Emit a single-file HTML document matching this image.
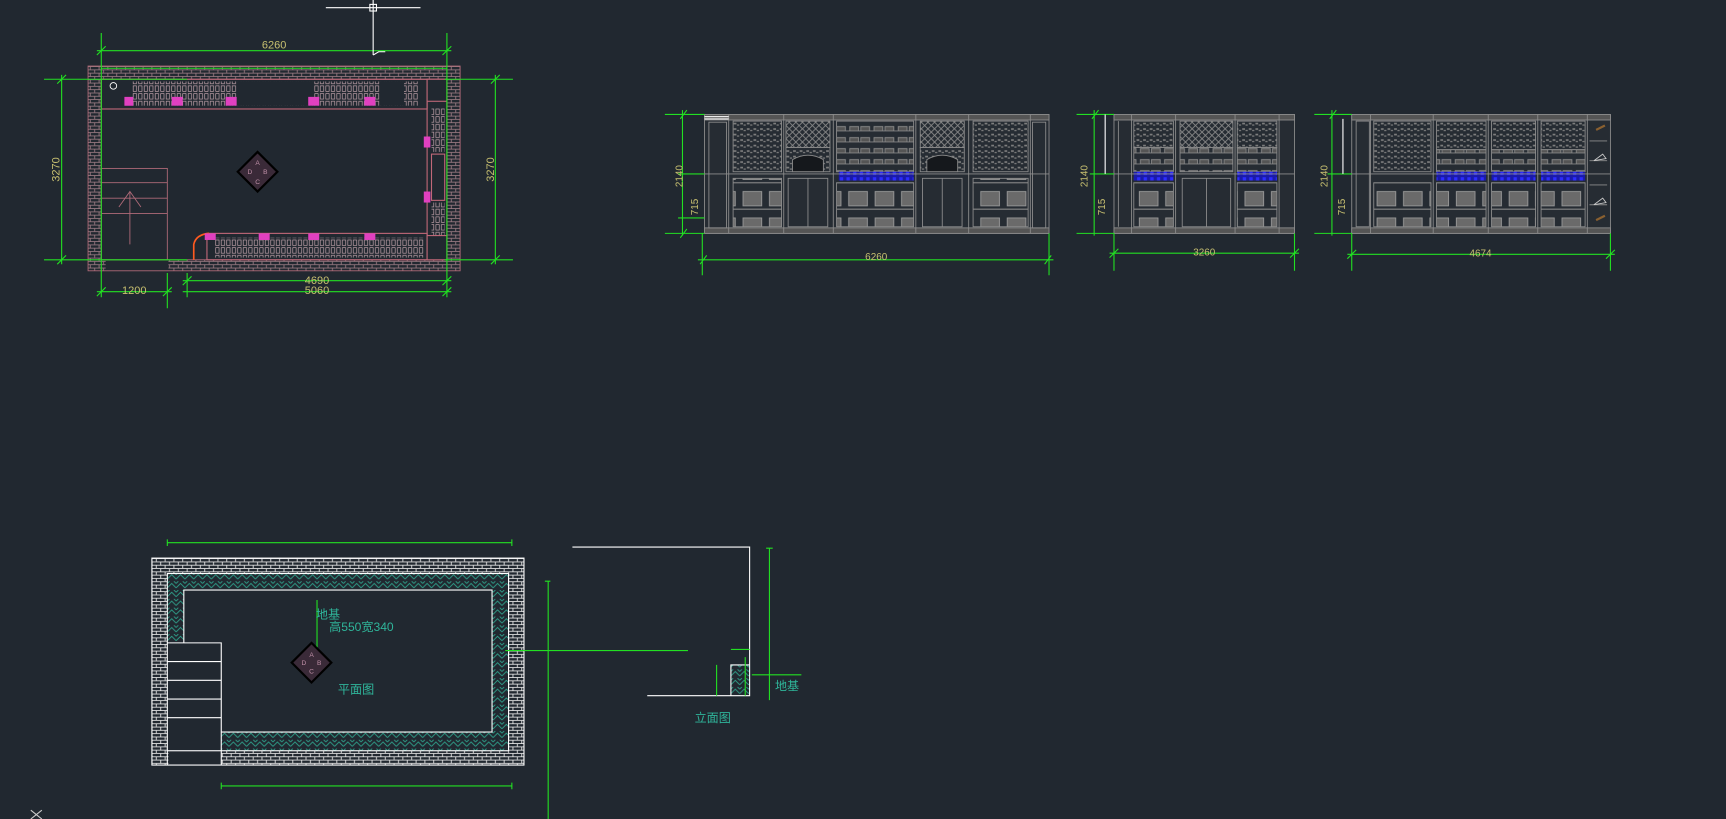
<!DOCTYPE html>
<html><head><meta charset="utf-8"><style>
html,body{margin:0;padding:0;background:#212830;width:1726px;height:819px;overflow:hidden}
svg{display:block}
text{font-family:"Liberation Sans","Noto Sans CJK SC",sans-serif}
</style></head><body>
<svg width="1726" height="819" viewBox="0 0 1568 744" preserveAspectRatio="none" xmlns="http://www.w3.org/2000/svg">
<defs>
<pattern id="brk" width="8" height="6" patternUnits="userSpaceOnUse">
<rect width="8" height="6" fill="#212830"/>
<path d="M0 0.5H8M0 3.5H8M2 0.5V3.5M6 3.5V6" stroke="#9a7a82" stroke-width="0.8" fill="none"/>
</pattern>
<pattern id="brkw" width="8" height="6" patternUnits="userSpaceOnUse">
<rect width="8" height="6" fill="#212830"/>
<path d="M0 0.5H8M0 3.5H8M2 0.5V3.5M6 3.5V6" stroke="#e8e8e8" stroke-width="0.8" fill="none"/>
</pattern>
<pattern id="hat" width="8" height="8" patternUnits="userSpaceOnUse">
<rect width="8" height="8" fill="#212830"/>
<path d="M0 6L4 2L8 6M0 2L2 0M6 0L8 2" stroke="#2fa08a" stroke-width="0.8" fill="none"/>
</pattern>
<pattern id="dots" width="6" height="5" patternUnits="userSpaceOnUse">
<rect width="6" height="5" fill="#262c33"/>
<path d="M0.5 1.5h2.5v1.5h-2.5zM3.5 3h2v1.2h-2z" fill="#7d7d7d"/>
</pattern>
<pattern id="lat" width="6" height="6" patternUnits="userSpaceOnUse">
<rect width="6" height="6" fill="#262c33"/>
<path d="M0 0L6 6M6 0L0 6" stroke="#8a8a8a" stroke-width="0.8"/>
</pattern>
<pattern id="shelf" width="22" height="10" patternUnits="userSpaceOnUse">
<rect width="22" height="10" fill="#262c33"/>
<path d="M0 9H22M2 5h8v4h-8zM12 5h8v4h-8z" stroke="#888" stroke-width="0.8" fill="#555"/>
</pattern>
<pattern id="box" width="24" height="24" patternUnits="userSpaceOnUse">
<rect width="24" height="24" fill="#262c33"/>
<rect x="3" y="6" width="17" height="13" fill="#6a6a6a" stroke="#999" stroke-width="0.8"/>
<path d="M0 22H24" stroke="#888"/>
</pattern>
<pattern id="blue" width="6" height="8" patternUnits="userSpaceOnUse">
<rect width="6" height="8" fill="#1a1aa8"/>
<rect x="1" y="1" width="3" height="6" fill="#2c2cff"/>
</pattern>
<pattern id="bot" width="5" height="7" patternUnits="userSpaceOnUse">
<rect width="5" height="7" fill="#212830"/>
<rect x="1" y="1" width="3" height="5" fill="none" stroke="#c8a8b0" stroke-width="0.6"/>
</pattern>
</defs>

<!-- ===== Plan 1 ===== -->
<g>
<rect x="80" y="60" width="338" height="186" fill="url(#brk)"/>
<rect x="92" y="72" width="314" height="164" fill="#212830"/>
<rect x="80" y="236" width="16" height="10" fill="url(#brk)"/>
<rect x="96" y="236" width="57" height="12" fill="#212830"/>
<rect x="80" y="60" width="338" height="186" fill="none" stroke="#b06a78" stroke-width="0.8"/>
<rect x="92" y="72" width="314" height="164" fill="none" stroke="#b06a78" stroke-width="0.8"/>
<!-- top cabinets -->
<rect x="92" y="72" width="296" height="27" fill="none" stroke="#c06878" stroke-width="1"/>
<rect x="120" y="74" width="260" height="22" fill="url(#bot)"/>
<rect x="215" y="74" width="70" height="22" fill="#212830"/>
<rect x="345" y="74" width="22" height="22" fill="#212830"/>
<circle cx="103" cy="78" r="3" fill="none" stroke="#fff" stroke-width="0.8"/>
<!-- bottom cabinets -->
<rect x="188" y="212" width="200" height="24" fill="none" stroke="#c06878" stroke-width="1"/>
<rect x="195" y="216" width="190" height="18" fill="url(#bot)"/>
<path d="M176 236V222Q178 213 190 212" stroke="#ff5a20" stroke-width="1.5" fill="none"/>
<!-- right cabinets -->
<rect x="388" y="72" width="18" height="164" fill="none" stroke="#c06878" stroke-width="1"/>
<rect x="392" y="98" width="12" height="40" fill="url(#bot)"/>
<rect x="392" y="140" width="12" height="42" fill="none" stroke="#c06878"/>
<rect x="392" y="184" width="12" height="50" fill="url(#bot)"/>
<rect x="388" y="72" width="18" height="20" fill="#212830" stroke="#c06878"/>
<rect x="388" y="214" width="18" height="22" fill="#212830" stroke="#c06878"/>
<!-- columns -->
<g fill="#e040c0">
<path d="M113 96h8l-1 -3h-6z"/><rect x="113" y="88" width="8" height="8"/>
<rect x="156" y="88" width="10" height="8"/><rect x="205" y="88" width="10" height="8"/>
<rect x="280" y="88" width="10" height="8"/><rect x="331" y="88" width="10" height="8"/>
<rect x="186" y="212" width="10" height="6"/><rect x="235" y="212" width="10" height="6"/>
<rect x="280" y="212" width="10" height="6"/><rect x="331" y="212" width="10" height="6"/>
<rect x="385" y="124" width="6" height="10"/><rect x="385" y="174" width="6" height="10"/>
</g>
<!-- stairs -->
<rect x="92" y="153" width="60" height="83" fill="none" stroke="#b06a78" stroke-width="0.8"/>
<path d="M92 166H152M92 180H152M92 194H152M118 222V175M108 188L118 174L128 188" stroke="#b06a78" stroke-width="0.8" fill="none"/>
<!-- compass -->
<g transform="translate(234,156)">
<path d="M0 -18L18 0L0 18L-18 0Z" fill="#3a2a38" stroke="#000" stroke-width="2"/>
<text x="0" y="-6" font-size="6" fill="#c090a8" text-anchor="middle">A</text>
<text x="-7" y="2" font-size="6" fill="#c090a8" text-anchor="middle">D</text>
<text x="7" y="2" font-size="6" fill="#c090a8" text-anchor="middle">B</text>
<text x="0" y="11" font-size="6" fill="#c090a8" text-anchor="middle">C</text>
</g>
<!-- dims -->
<g stroke="#22e022" stroke-width="1" fill="none">
<path d="M92 30V270M406 30V270M88 46H410M40 72H170M404 72H466M40 236H170M404 236H466M56 68V240M450 68V240M88 265H156M166 255H410M166 265H410M152 248V280M170 248V270M92 62H406"/>
<path d="M88 50L96 42M402 50L410 42M52 76L60 68M52 240L60 232M446 76L454 68M446 240L454 232M88 269L96 261M148 269L156 261M166 259L174 251M402 259L410 251M402 269L410 261"/>
</g>
<g fill="#c8c070" font-size="10" text-anchor="middle">
<text x="249" y="44">6260</text>
<text x="122" y="267">1200</text>
<text x="288" y="258">4690</text>
<text x="288" y="267">5060</text>
<text transform="translate(54,154) rotate(-90)">3270</text>
<text transform="translate(449,154) rotate(-90)">3270</text>
</g>
<path d="M296 7H382M339 0V50M339 50l5 -3h6" stroke="#fff" stroke-width="1" fill="none"/>
<rect x="336" y="4" width="6" height="6" fill="none" stroke="#fff"/>
</g>

<!-- ===== Elevation generic helper drawn manually ===== -->
<g stroke="#8c8c8c" stroke-width="0.8">
<!-- E1 -->
<rect x="640" y="104" width="313" height="108" fill="#262c33"/>
<rect x="640" y="104" width="313" height="5" fill="#555"/>
<rect x="640" y="207" width="313" height="5" fill="#555"/>
<rect x="644" y="111" width="16" height="96" fill="none"/>
<rect x="666" y="110" width="44" height="46" fill="url(#dots)"/>
<rect x="884" y="110" width="50" height="46" fill="url(#dots)"/>
<rect x="714" y="110" width="40" height="24" fill="url(#lat)"/>
<rect x="836" y="110" width="40" height="24" fill="url(#lat)"/>
<rect x="714" y="134" width="40" height="22" fill="url(#dots)"/>
<rect x="836" y="134" width="40" height="22" fill="url(#dots)"/>
<path d="M720 156V145Q734 137 748 145V156Z" fill="#15181c"/>
<path d="M842 156V145Q856 137 870 145V156Z" fill="#15181c"/>
<rect x="760" y="110" width="70" height="46" fill="url(#shelf)"/>
<rect x="762" y="156" width="68" height="8" fill="url(#blue)" stroke="none"/>
<rect x="666" y="162" width="44" height="44" fill="url(#box)"/>
<rect x="884" y="162" width="50" height="44" fill="url(#box)"/>
<rect x="760" y="166" width="70" height="40" fill="url(#box)"/>
<rect x="716" y="162" width="36" height="44" fill="none"/>
<rect x="838" y="162" width="36" height="44" fill="none"/>
<path d="M734 162V206M856 162V206M662 104V212M712 104V212M757 104V212M832 104V212M880 104V212M936 104V212M640 158H953" fill="none"/>
<rect x="938" y="111" width="12" height="96" fill="none"/>
<!-- E2 -->
<rect x="1012" y="104" width="164" height="108" fill="#262c33"/>
<rect x="1012" y="104" width="164" height="5" fill="#555"/>
<rect x="1012" y="207" width="164" height="5" fill="#555"/>
<rect x="1030" y="110" width="36" height="24" fill="url(#dots)"/>
<rect x="1124" y="110" width="36" height="24" fill="url(#dots)"/>
<rect x="1030" y="134" width="36" height="22" fill="url(#shelf)"/>
<rect x="1124" y="134" width="36" height="22" fill="url(#shelf)"/>
<rect x="1072" y="110" width="48" height="24" fill="url(#lat)"/>
<rect x="1072" y="134" width="48" height="22" fill="url(#shelf)"/>
<rect x="1030" y="156" width="36" height="8" fill="url(#blue)" stroke="none"/>
<rect x="1124" y="156" width="36" height="8" fill="url(#blue)" stroke="none"/>
<rect x="1030" y="166" width="36" height="40" fill="url(#box)"/>
<rect x="1124" y="166" width="36" height="40" fill="url(#box)"/>
<rect x="1074" y="162" width="44" height="44" fill="none"/>
<path d="M1096 162V206M1028 104V212M1068 104V212M1122 104V212M1162 104V212M1012 158H1176M1016 110V206" fill="none"/>
<!-- E3 -->
<rect x="1228" y="104" width="235" height="108" fill="#262c33"/>
<rect x="1228" y="104" width="235" height="5" fill="#555"/>
<rect x="1228" y="207" width="235" height="5" fill="#555"/>
<rect x="1248" y="110" width="52" height="46" fill="url(#dots)"/>
<rect x="1305" y="110" width="45" height="26" fill="url(#dots)"/>
<rect x="1355" y="110" width="40" height="26" fill="url(#dots)"/>
<rect x="1400" y="110" width="40" height="26" fill="url(#dots)"/>
<rect x="1305" y="136" width="45" height="20" fill="url(#shelf)"/>
<rect x="1355" y="136" width="40" height="20" fill="url(#shelf)"/>
<rect x="1400" y="136" width="40" height="20" fill="url(#shelf)"/>
<rect x="1305" y="156" width="45" height="8" fill="url(#blue)" stroke="none"/>
<rect x="1355" y="156" width="40" height="8" fill="url(#blue)" stroke="none"/>
<rect x="1400" y="156" width="40" height="8" fill="url(#blue)" stroke="none"/>
<rect x="1248" y="166" width="52" height="40" fill="url(#box)"/>
<rect x="1305" y="166" width="45" height="40" fill="url(#box)"/>
<rect x="1355" y="166" width="40" height="40" fill="url(#box)"/>
<rect x="1400" y="166" width="40" height="40" fill="url(#box)"/>
<rect x="1232" y="110" width="12" height="96" fill="none"/>
<path d="M1245 104V212M1302 104V212M1352 104V212M1397 104V212M1442 104V212M1228 158H1463M1444 128H1460M1444 146H1460M1444 168H1460M1444 186H1460" fill="none"/>
</g>
<g fill="none" stroke="#c8c8c8" stroke-width="0.8">
<path d="M1448 146l8 -6l3 4zM1448 186l8 -6l3 4z"/>
</g>
<path d="M1450 118l8-4M1450 200l8-4" stroke="#8a6030" stroke-width="2"/>
<path d="M640 106H662M640 108H662" stroke="#fff" stroke-width="1"/>
<!-- elev dims -->
<g stroke="#22e022" stroke-width="1" fill="none">
<path d="M604 104H640M620 100V214M604 212H640M616 158H640M616 198H640M638 212V250M953 212V250M634 236H957M618 108L624 100M618 216L624 208M636 240L642 232M949 240L955 232"/>
<path d="M978 104H1012M994 100V214M978 212H1012M990 158H1012M1012 212V246M1176 212V246M1008 230H1180M992 108L998 100M1008 234L1016 226M1172 234L1180 226"/>
<path d="M1194 104H1228M1210 100V214M1194 212H1228M1206 158H1228M1228 212V246M1463 212V246M1224 231H1467M1208 108L1214 100M1224 235L1232 227M1459 235L1467 227"/>
</g>
<path d="M1004 104V158M1220 108V158" stroke="#fff" stroke-width="1"/>
<g fill="#c8c070" font-size="9" text-anchor="middle">
<text x="796" y="236">6260</text>
<text x="1094" y="232">3260</text>
<text x="1345" y="233">4674</text>
<text transform="translate(620,160) rotate(-90)">2140</text>
<text transform="translate(634,188) rotate(-90)">715</text>
<text transform="translate(988,160) rotate(-90)">2140</text>
<text transform="translate(1004,188) rotate(-90)">715</text>
<text transform="translate(1206,160) rotate(-90)">2140</text>
<text transform="translate(1222,188) rotate(-90)">715</text>
</g>

<!-- ===== Bottom plan ===== -->
<rect x="138" y="507" width="338" height="188" fill="url(#brkw)"/>
<rect x="152" y="521" width="310" height="161" fill="url(#hat)"/>
<rect x="167" y="536" width="280" height="129" fill="#212830" stroke="#fff" stroke-width="1"/>
<rect x="152" y="584" width="49" height="98" fill="#212830"/>
<rect x="153" y="682" width="48" height="14" fill="#212830"/>
<g stroke="#fff" stroke-width="1" fill="none">
<rect x="138" y="507" width="338" height="188"/>
<rect x="152" y="521" width="310" height="161"/>
<path d="M152 584H201V695M152 601H201M152 618H201M152 635H201M152 652H201M152 695V682"/>
</g>
<g stroke="#22e022" stroke-width="1" fill="none">
<path d="M152 493H465M152 490V496M465 490V496M201 714H465M201 711V717M465 711V717M498 528V762M495 528H500M495 762H500M459 591H625M288 545V592"/>
</g>
<g transform="translate(283,602)">
<path d="M0 -18L18 0L0 18L-18 0Z" fill="#3a2a38" stroke="#000" stroke-width="2"/>
<text x="0" y="-5" font-size="6" fill="#c090a8" text-anchor="middle">A</text>
<text x="-7" y="2" font-size="6" fill="#c090a8" text-anchor="middle">D</text>
<text x="7" y="2" font-size="6" fill="#c090a8" text-anchor="middle">B</text>
<text x="0" y="10" font-size="6" fill="#c090a8" text-anchor="middle">C</text>
</g>
<g fill="#2fb59a" font-size="11">
<text x="287" y="562">地基</text>
<text x="299" y="573">高550宽340</text>
<text x="307" y="630">平面图</text>
<text x="631" y="656">立面图</text>
<text x="704" y="627">地基</text>
</g>
<!-- side elevation -->
<rect x="664" y="604" width="17" height="28" fill="url(#hat)"/>
<g stroke="#fff" stroke-width="1" fill="none">
<path d="M520 497H681V632H588M664 632V604H681"/>
</g>
<g stroke="#22e022" stroke-width="1" fill="none">
<path d="M699 498V636M696 498H702M683 613H728M664 590H681M651 604V632M677 597V632"/>
</g>
<path d="M28 736l10 8M38 736l-10 8" stroke="#ccc" stroke-width="1"/>
</svg>
</body></html>
